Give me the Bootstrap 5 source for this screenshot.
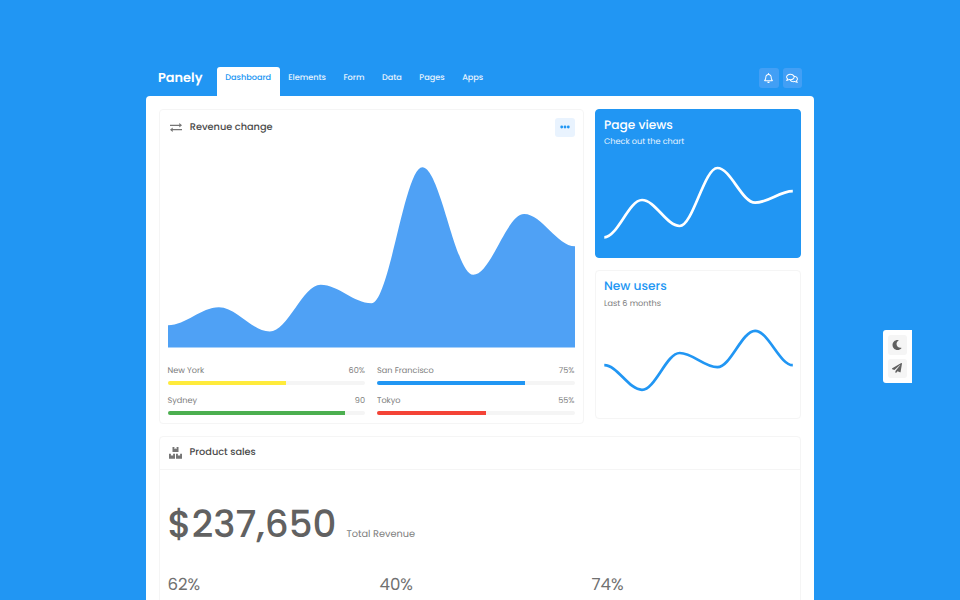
<!DOCTYPE html>
<html lang="en">
<head>
<meta charset="utf-8">
<meta name="viewport" content="width=device-width, initial-scale=1">
<title>Panely Dashboard</title>
<link href="https://cdn.jsdelivr.net/npm/bootstrap@5.3.0/dist/css/bootstrap.min.css" rel="stylesheet">
<style>
:root{--pn-blue:#2196f3;--pn-line:#f5f5f5}
html,body{height:600px;overflow:hidden}
body{background:var(--pn-blue);font-family:Poppins,Inter,"Open Sans",sans-serif;font-size:8.15px;line-height:13px;color:#7c7c7c;white-space:nowrap;text-rendering:geometricPrecision}
svg{display:block}
.shell{width:668px;margin-left:146px;padding-top:67px}
.topbar{height:29px;padding:0 12px}
.brand{width:58.5px;font-size:12.9px;font-weight:600;color:#fff;line-height:21px}
.topbar .nav-link{height:29px;line-height:13px;padding:4px 8.75px 0;color:#e6f3fe;font-size:8.17px;font-weight:500;border-radius:3px 3px 0 0}
.topbar .nav-link.active{background:#fff;color:var(--pn-blue);width:63px}
.tool{width:19.5px;height:19.5px;border-radius:3px;display:flex;align-items:center;justify-content:center}
.tool-top{background:#429ff5;color:#fff;margin-top:1px}
.tool-more{background:#e9f3fe;color:var(--pn-blue)}
.tool-side{background:#f5f5f5;color:#616161}
.sheet{background:#fff;border-radius:4px 4px 0 0;height:504px;overflow:hidden;padding:12.5px 13px 0 12.5px}
.panel{border:1px solid var(--pn-line);border-radius:4px;background:#fff}
.revenue{width:425px;height:315px;padding:8px 8px 0}
.stack{width:206px}
.small-panel{height:149px;padding:7.5px 8px 0}
.small-panel.filled{background:var(--pn-blue);border-color:var(--pn-blue);color:#e6f3fe}
.small-panel.filled .headline{position:relative;top:.6px}
.panel-title{font-size:9.75px;line-height:18px;font-weight:500;color:#4a4a4a;padding-top:1px}
.headline{font-size:12.2px;line-height:15px;font-weight:500}
.sub{line-height:13px;margin-top:3px}
.meter{height:4px;border-radius:2px;background:#f5f5f5;margin-top:4px}
.meters{column-gap:12px;row-gap:9px;grid-template-columns:1fr 1fr;margin-top:16px}
.swap-icon{margin:5px 8.3px 0 2px}
.chart-main{margin-top:19.500px}
.chart-mini{margin-top:10.500px}
.sales{margin-top:12px;height:200px}
.sales-head{height:33px;border-bottom:1px solid var(--pn-line);padding-left:9px}
.total{font-size:37.3px;line-height:50px;font-weight:500;color:#616161}
.total-note{font-size:9.75px;margin-left:10px}
.side-dock{position:fixed;left:883px;top:330px;width:29px;height:52.5px;border-radius:3px 0 0 3px;background:#fff;padding:5px 0 0 4.5px}
.share{width:212px;font-size:16.6px;line-height:24px;color:#707070}
</style>
<script src="https://cdn.jsdelivr.net/npm/bootstrap@5.3.0/dist/js/bootstrap.bundle.min.js"></script>
</head>
<body>
<div class="shell">
  <header class="topbar d-flex">
    <div class="brand">Panely</div>
    <nav class="nav flex-nowrap flex-grow-1">
      <a class="nav-link active" href="#">Dashboard</a>
      <a class="nav-link" href="#">Elements</a>
      <a class="nav-link" href="#">Form</a>
      <a class="nav-link" href="#">Data</a>
      <a class="nav-link" href="#">Pages</a>
      <a class="nav-link" href="#">Apps</a>
    </nav>
    <div class="d-flex" style="gap:4px">
      <span class="tool tool-top"><svg width="9" height="10" viewBox="0 0 448 512" fill="currentColor"><path d="M439.39 362.29c-19.32-20.76-55.47-51.99-55.47-154.29 0-77.7-54.48-139.9-127.94-155.16V32c0-17.67-14.32-32-31.98-32s-31.98 14.33-31.98 32v20.84C118.56 68.1 64.08 130.3 64.08 208c0 102.3-36.15 133.53-55.47 154.29-6 6.45-8.66 14.16-8.61 21.71.11 16.4 12.98 32 32.1 32h383.8c19.12 0 32-15.6 32.1-32 .05-7.55-2.61-15.27-8.61-21.71zM67.53 368c21.22-27.97 44.42-74.33 44.53-159.42 0-.2-.06-.38-.06-.58 0-61.86 50.14-112 112-112s112 50.14 112 112c0 .2-.06.38-.06.58.11 85.1 23.31 131.46 44.53 159.42H67.53zM224 512c35.32 0 63.97-28.65 63.97-64H160.03c0 35.35 28.65 64 63.97 64z"/></svg></span>
      <span class="tool tool-top"><svg width="12" height="10.500" viewBox="0 0 576 512" fill="currentColor"><path d="M532 386.2c27.5-27.1 44-61.1 44-98.2 0-80-76.5-146.1-176.2-157.9C368.3 72.500 294.300 32 208 32 93.100 32 0 103.600 0 192c0 37 16.500 71 44 98.200-15.300 30.700-37.300 54.500-37.700 54.900-6.300 6.700-8.100 16.500-4.400 25 3.600 8.500 12 14 21.200 14 53.500 0 96.700-20.200 125.200-38.800 9.200 2.100 18.700 3.700 28.400 4.900C208.100 407.600 281.800 448 368 448c20.800 0 40.800-2.400 59.800-6.800C456.300 459.700 499.400 480 553 480c9.200 0 17.500-5.500 21.200-14 3.600-8.500 1.900-18.300-4.400-25-.4-.3-22.500-24.100-37.800-54.800zm-392.800-92.300L122.100 305c-14.100 9.100-28.500 16.300-43.100 21.400 2.700-4.700 5.400-9.700 8-14.800l15.500-31.100L77.700 256C64.200 242.600 48 220.700 48 192c0-60.700 73.300-112 160-112s160 51.300 160 112-73.300 112-160 112c-16.500 0-33-1.900-49-5.600l-19.800-4.500zM498.300 352l-24.700 24.400 15.500 31.100c2.600 5.100 5.300 10.100 8 14.800-14.600-5.100-29-12.300-43.100-21.400l-17.100-11.100-19.900 4.600c-16 3.700-32.500 5.600-49 5.600-54 0-102.200-20.100-131.300-49.700C338 339.500 416 272.900 416 192c0-3.400-.4-6.700-.7-10C479.700 196.500 528 238.800 528 288c0 28.700-16.200 50.600-29.700 64z"/></svg></span>
    </div>
  </header>

  <main class="sheet">
    <div class="d-flex justify-content-between align-items-start">
      <section class="panel revenue">
        <div class="d-flex align-items-start">
          <svg class="swap-icon" width="12" height="9" viewBox="0 0 12 9" fill="none" stroke="#757575" stroke-width="1.300"><path d="M0 2.300H10.500M1.500 6.700H12"/><path d="M9.300 0 12 2.300 9.300 4.600zM2.700 4.400 0 6.700 2.700 9z" fill="#757575" stroke="none"/></svg>
          <div class="panel-title flex-grow-1">Revenue change</div>
          <span class="tool tool-more"><svg width="10" height="4" viewBox="0 0 10 4" fill="currentColor"><circle cx="1.700" cy="2" r="1.400"/><circle cx="5" cy="2" r="1.400"/><circle cx="8.300" cy="2" r="1.400"/></svg></span>
        </div>
        <svg class="chart-main" width="407" height="191" viewBox="167.500 157 407 191"><path id="area" fill="#4fa1f5"/></svg>
        <div class="meters d-grid">
          <div><div class="d-flex justify-content-between"><span>New York</span><span>60%</span></div><div class="progress meter"><div class="progress-bar" style="width:60%;background:#ffeb3b"></div></div></div>
          <div><div class="d-flex justify-content-between"><span>San Francisco</span><span>75%</span></div><div class="progress meter"><div class="progress-bar" style="width:75%;background:#2196f3"></div></div></div>
          <div><div class="d-flex justify-content-between"><span>Sydney</span><span>90</span></div><div class="progress meter"><div class="progress-bar" style="width:90%;background:#4caf50"></div></div></div>
          <div><div class="d-flex justify-content-between"><span>Tokyo</span><span>55%</span></div><div class="progress meter"><div class="progress-bar" style="width:55%;background:#f44336"></div></div></div>
        </div>
      </section>
      <div class="stack d-flex flex-column" style="gap:12.5px">
        <section class="panel small-panel filled">
          <div class="headline text-white">Page views</div>
          <div class="sub">Check out the chart</div>
          <svg class="chart-mini" width="190" height="90" viewBox="604 159 190 90"><path id="views" fill="none" stroke="#fff" stroke-width="2.700"/></svg>
        </section>
        <section class="panel small-panel">
          <div class="headline" style="color:#2196f3">New users</div>
          <div class="sub">Last 6 months</div>
          <svg class="chart-mini" width="190" height="90" viewBox="604 320.500 190 90"><path id="users" fill="none" stroke="#2196f3" stroke-width="2.700"/></svg>
        </section>
      </div>
    </div>
    <section class="panel sales">
      <div class="sales-head d-flex align-items-center">
        <svg width="13" height="12" viewBox="0 0 13 12" fill="#757575"><path d="M3.500 0H5.400V2L6.500 1.500 7.600 2V0H9.500V5H3.500zM0 6.700H1.900V8.700L3 8.200 4.100 8.700V6.700H6V11.700H0zM7 6.700H8.900V8.700L10 8.200 11.100 8.700V6.700H13V11.700H7z"/></svg>
        <div class="panel-title ms-2">Product sales</div>
      </div>
      <div style="padding:30px 8px 0">
        <div class="d-flex align-items-baseline"><span class="total">$237,650</span><span class="total-note">Total Revenue</span></div>
        <div class="d-flex" style="margin-top:23px"><div class="share flex-shrink-0">62%</div><div class="share flex-shrink-0">40%</div><div class="share">74%</div></div>
      </div>
    </section>
  </main>
</div>
<aside class="side-dock d-flex flex-column" style="gap:4px">
  <span class="tool tool-side"><svg width="10" height="10" viewBox="0 0 512 512" fill="currentColor"><path d="M283.211 512c78.962 0 151.079-35.925 198.857-94.792 7.068-8.708-.639-21.430-11.562-19.350-124.203 23.654-238.262-71.576-238.262-196.954 0-72.222 38.662-138.635 101.498-174.394 9.686-5.512 7.250-20.197-3.756-22.230A258.156 258.156 0 0 0 283.211 0c-141.309 0-256 114.511-256 256 0 141.309 114.511 256 256 256z"/></svg></span>
  <span class="tool tool-side"><svg width="10" height="10" viewBox="0 0 512 512" fill="currentColor"><path d="M476 3.200 12.500 270.600c-18.100 10.400-15.800 35.600 2.200 43.200L121 358.400l287.300-253.200c5.500-4.900 13.300 2.600 8.600 8.300L176 407v80.500c0 23.600 28.500 32.900 42.500 15.800L282 426l124.600 52.200c14.200 6 30.400-2.900 33-18.200l72-432C515 7.800 493.300-6.800 476 3.200z"/></svg></span>
</aside>
<script>
// Builds a curve with horizontal tangents at every sample.
function smooth(x0, step, ys) {
  let d = `M${x0} ${ys[0]}`;
  for (let i = 1; i < ys.length; i++) {
    const a = x0 + step * (i - 1), b = a + step, k = step * 0.35;
    d += `C${a + k} ${ys[i - 1]} ${b - k} ${ys[i]} ${b} ${ys[i]}`;
  }
  return d;
}
document.getElementById('area').setAttribute('d', smooth(167.5, 50.875, [325.2, 307.2, 331.5, 284.7, 303.2, 167.2, 274.8, 214, 246.3]) + 'V347.500H167.500Z');
document.getElementById('views').setAttribute('d', smooth(604.3, 37.7, [237.3, 200, 226, 168, 202.7, 191.2]));
document.getElementById('users').setAttribute('d', smooth(604.3, 37.7, [365.7, 390.3, 353.5, 367.7, 331.3, 365.7]));
</script>
</body>
</html>
